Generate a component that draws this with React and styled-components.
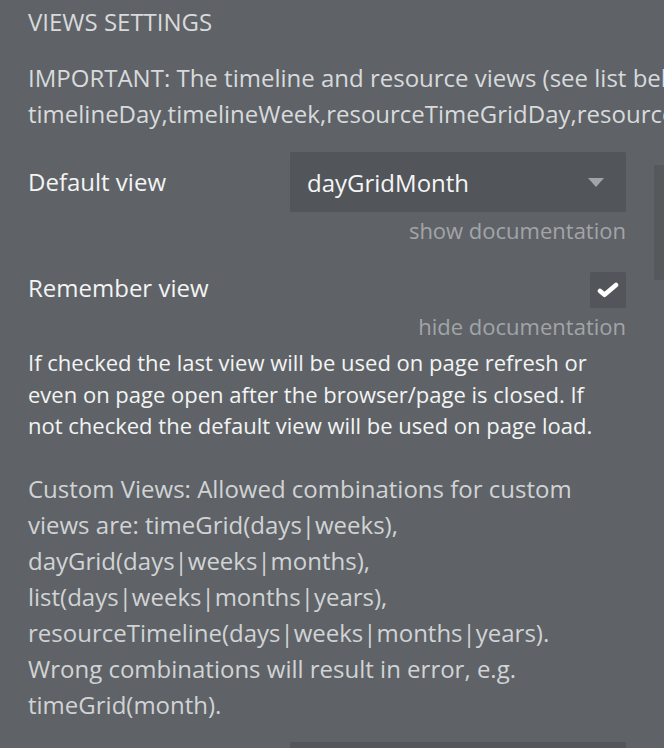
import styled, { createGlobalStyle } from "styled-components";

const GlobalStyle = createGlobalStyle`
    html, body {
        margin: 0;
        padding: 0;
        background: #5f6367;
        overflow: hidden;
    }

    body {
        font-family: "Open Sans", "DejaVu Sans", sans-serif;
        -webkit-font-smoothing: antialiased;
    }
`

const Panel = styled.section`
    position: relative;
    width: 664px;
    height: 748px;
    box-sizing: border-box;
    padding: 4px 38px 0 28px;
    overflow: hidden;
`

const SectionTitle = styled.h3`
    margin: 0;
    font-size: 24px;
    font-weight: 400;
    line-height: 36px;
    color: #d8dadc;
    text-transform: uppercase;
`

const Note = styled.p`
    margin: 20px 0 0;
    font-size: 24px;
    line-height: 36px;
    color: #d8dadc;
    white-space: nowrap;
`

const FieldRow = styled.div`
    display: flex;
    align-items: center;
    justify-content: space-between;
    margin-top: ${(p) => p.$gap || 0}px;
`

const Label = styled.span`
    font-size: 24px;
    line-height: 36px;
    transform: translateY(${(p) => -(p.$lift || 0)}px);
    color: #f3f4f4;
`

const Dropdown = styled.div`
    display: flex;
    align-items: center;
    justify-content: space-between;
    width: 336px;
    height: 60px;
    box-sizing: border-box;
    padding: 0 22px 0 17px;
    background: #52565a;
    border-radius: 2px;
    font-size: 24px;
    color: #f5f5f5;

    .arrow {
        width: 0;
        height: 0;
        border-left: 8px solid transparent;
        border-right: 8px solid transparent;
        border-top: 9px solid #a1a5a8;
    }
`

const Checkbox = styled.div`
    display: flex;
    align-items: center;
    justify-content: center;
    width: 36px;
    height: 36px;
    background: #52565a;
    border-radius: 2px;
`

const DocLink = styled.div`
    margin-top: ${(p) => p.$gap || 0}px;
    text-align: right;
    font-size: 22px;
    line-height: 28px;
    color: #a2a5a8;
`

const DocText = styled.p`
    margin: 7px 0 0;
    font-size: 22px;
    line-height: 31.5px;
    color: #f3f4f4;
    white-space: nowrap;
`

const HelpText = styled.p`
    margin: 29px 0 0;
    font-size: 24px;
    line-height: 36px;
    color: #d1d3d5;
`

const NextField = styled.div`
    margin: 19px 0 0 262px;
    width: 336px;
    height: 60px;
    background: #52565a;
    border-radius: 2px;
`

const ScrollThumb = styled.div`
    position: absolute;
    top: 165px;
    right: 0;
    width: 10px;
    height: 115px;
    background: #55595c;
`

const CheckIcon = () => (
    <svg width="22" height="16" viewBox="0 0 22 16">
        <path d="M3 9 L7.5 12.8 L19 3" fill="none" stroke="#ffffff" strokeWidth="4.6" strokeLinecap="round" strokeLinejoin="round" />
    </svg>
);

const App = () => {
    return (
        <>
            <GlobalStyle />
            <Panel>
                <SectionTitle>Views settings</SectionTitle>
                <Note>
                    IMPORTANT: The timeline and resource views (see list below) require a license key:<br />
                    timelineDay,timelineWeek,resourceTimeGridDay,resourceTimeGridWeek
                </Note>

                <FieldRow $gap={20}>
                    <Label>Default view</Label>
                    <Dropdown>
                        <span>dayGridMonth</span>
                        <span className="arrow" />
                    </Dropdown>
                </FieldRow>
                <DocLink $gap={4}>show documentation</DocLink>

                <FieldRow $gap={28}>
                    <Label $lift={2}>Remember view</Label>
                    <Checkbox>
                        <CheckIcon />
                    </Checkbox>
                </FieldRow>
                <DocLink $gap={4}>hide documentation</DocLink>
                <DocText>
                    If checked the last view will be used on page refresh or<br />
                    even on page open after the browser/page is closed. If<br />
                    not checked the default view will be used on page load.
                </DocText>

                <HelpText>
                    Custom Views: Allowed combinations for custom views are: timeGrid(days|weeks),
                    dayGrid(days|weeks|months), list(days|weeks|months|years),
                    resourceTimeline(days|weeks|months|years). Wrong combinations will result in error, e.g. timeGrid(month).
                </HelpText>

                <NextField />
                <ScrollThumb />
            </Panel>
        </>
    );
};

export default App;
